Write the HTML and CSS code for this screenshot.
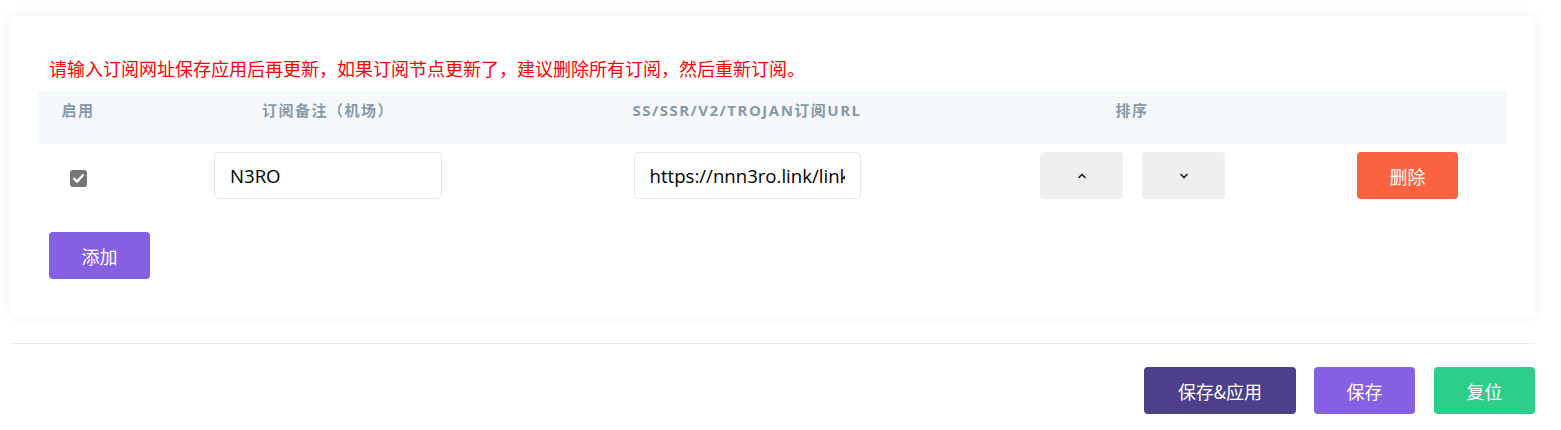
FILE: index.html
```html
<!DOCTYPE html>
<html lang="zh-CN">
<head>
<meta charset="utf-8">
<title>订阅</title>
<link rel="stylesheet" href="styles.css">
</head>
<body>
<div class="card">
  <div class="notice">请输入订阅网址保存应用后再更新，如果订阅节点更新了，建议删除所有订阅，然后重新订阅。</div>
  <div class="table">
    <div class="thead">
      <div class="th">启用</div>
      <div class="th">订阅备注（机场）</div>
      <div class="th">SS/SSR/V2/TROJAN订阅URL</div>
      <div class="th">排序</div>
      <div class="th"></div>
    </div>
    <div class="trow">
      <div class="td"><span class="check"><svg width="13" height="13" viewBox="0 0 13 13"><path d="M2.2 6.8 L5.1 9.6 L10.8 3.2" fill="none" stroke="#fff" stroke-width="2.4" stroke-linecap="round" stroke-linejoin="round"/></svg></span></div>
      <div class="td"><div class="field"><input type="text" value="N3RO"></div></div>
      <div class="td"><div class="field url"><input type="text" value="https://nnn3ro.link/link/abcdefg"></div></div>
      <div class="td sort">
        <button class="btn-sort"><svg width="10" height="6" viewBox="0 0 10 6"><path d="M1.5 5 L5 1.5 L8.5 5" fill="none" stroke="#222" stroke-width="1.6"/></svg></button>
        <button class="btn-sort"><svg width="10" height="6" viewBox="0 0 10 6"><path d="M1.5 1 L5 4.5 L8.5 1" fill="none" stroke="#222" stroke-width="1.6"/></svg></button>
      </div>
      <div class="td"><button class="btn btn-danger">删除</button></div>
    </div>
  </div>
  <button class="btn btn-purple add">添加</button>
</div>
<div class="divider"></div>
<div class="actions">
  <button class="btn btn-apply">保存&amp;应用</button>
  <button class="btn btn-purple">保存</button>
  <button class="btn btn-success">复位</button>
</div>
</body>
</html>
```
FILE: styles.css
```css
* { box-sizing: border-box; }
html, body { margin: 0; padding: 0; background: #fff; }
body {
  font-family: "Open Sans", "Noto Sans CJK SC", sans-serif;
  color: #32325d;
  width: 1561px;
  height: 430px;
  overflow: hidden;
}
.card {
  margin: 16px 26px 0 10px;
  background: #fff;
  border-radius: 5px;
  box-shadow: 0 0 14px rgba(0, 0, 0, 0.06);
  padding: 39px 28px 38px 28px;
}
.notice {
  color: #ff0000;
  font-size: 18px;
  line-height: 26px;
  padding-left: 11px;
  margin-bottom: 10px;
  font-family: "Noto Sans CJK SC", sans-serif;
}
.thead, .trow {
  display: grid;
  grid-template-columns: 80px 420px 418px 352px 1fr;
}
.thead {
  background: #f6f9fc;
  height: 53px;
}
.th {
  text-align: center;
  padding-top: 9px;
  font-size: 15px;
  line-height: 20px;
  font-weight: 700;
  letter-spacing: 1.5px;
  color: #8898aa;
}
.trow { padding-top: 8px; }
.td {
  display: flex;
  justify-content: center;
  align-items: center;
  height: 47px;
}
.check {
  display: flex;
  align-items: center;
  justify-content: center;
  width: 17px;
  height: 17px;
  margin-top: 5px;
  background: #767676;
  border-radius: 3px;
}
.field {
  width: 228px;
  height: 47px;
  border: 1px solid #e3e7ec;
  border-radius: 4px;
  padding: 0 15px;
  background: #fff;
  display: flex;
  align-items: center;
}
.field.url { width: 227px; }
.field input {
  width: 100%;
  border: none;
  padding: 0;
  margin: 0;
  font-family: "Open Sans", sans-serif;
  font-size: 18.6px;
  color: #000;
  background: transparent;
  outline: none;
}
.sort { gap: 19px; padding-left: 1px; }
.btn-sort {
  width: 83px;
  height: 47px;
  border: none;
  border-radius: 4px;
  background: #efefef;
  display: flex;
  align-items: center;
  justify-content: center;
  padding: 0;
}
.btn {
  border: none;
  border-radius: 4px;
  height: 47px;
  color: #fff;
  font-family: "Noto Sans CJK SC", sans-serif;
  font-size: 18px;
  padding: 0;
  cursor: pointer;
}
.btn-danger { background: #fb6340; width: 101px; }
.btn-purple { background: #8560e3; width: 101px; }
.btn-apply { background: #4e3f8b; width: 152px; }
.btn-success { background: #2dce89; width: 101px; }
.add { margin: 33px 0 0 11px; display: block; }
.divider {
  margin: 26px 26px 0 10px;
  height: 1px;
  background: #ececec;
}
.actions {
  display: flex;
  justify-content: flex-end;
  gap: 18px;
  margin: 23px 26px 0 0;
}
.actions .btn-success { margin-left: 1px; }
```
